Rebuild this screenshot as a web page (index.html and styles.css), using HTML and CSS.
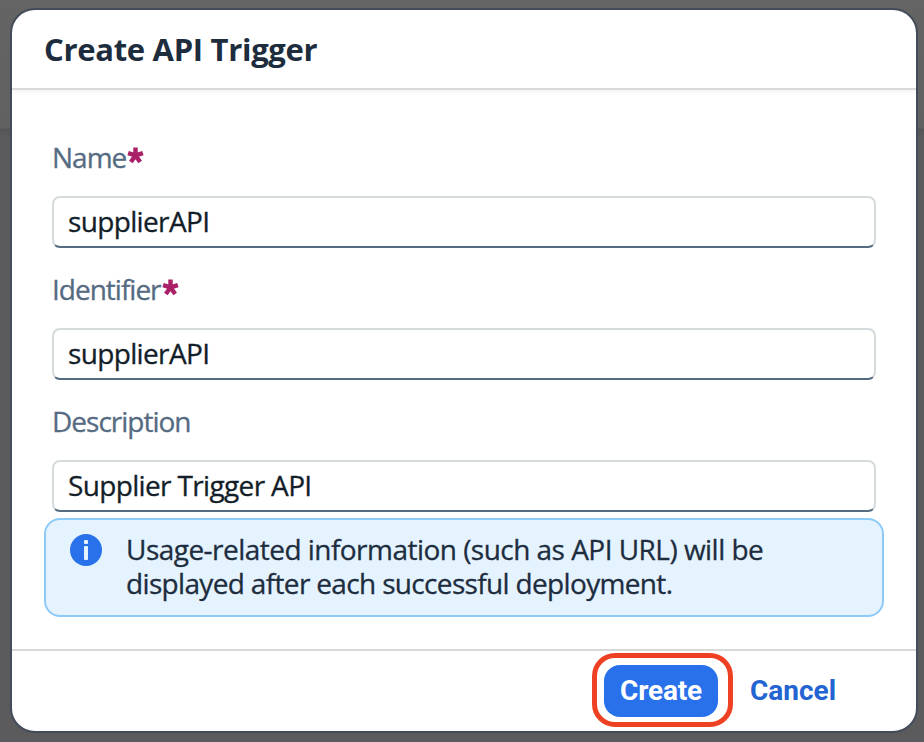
FILE: index.html
```html
<!DOCTYPE html>
<html lang="en">
<head>
<meta charset="utf-8">
<title>Create API Trigger</title>
<link rel="stylesheet" href="styles.css">
</head>
<body>
<div class="overlay">
  <section class="dialog" role="dialog" aria-labelledby="title">
    <header class="dialog-header"><h1 id="title" class="title">Create API Trigger</h1></header>
    <form class="dialog-body">
      <div class="field">
        <label class="label" for="name">Name<svg class="star" viewBox="0 0 16 17"><path d="M8 8V.5M8 8l7-2.2M8 8l4.4 6.1M8 8l-4.4 6.1M8 8L1 5.8"/></svg></label>
        <input class="input" id="name" type="text" value="supplierAPI">
      </div>
      <div class="field">
        <label class="label" for="identifier">Identifier<svg class="star" viewBox="0 0 16 17"><path d="M8 8V.5M8 8l7-2.2M8 8l4.4 6.1M8 8l-4.4 6.1M8 8L1 5.8"/></svg></label>
        <input class="input" id="identifier" type="text" value="supplierAPI">
      </div>
      <div class="field">
        <label class="label" for="description">Description</label>
        <input class="input" id="description" type="text" value="Supplier Trigger API">
      </div>
      <div class="info">
        <svg class="info-icon" viewBox="0 0 32 32"><circle cx="16" cy="16" r="16" fill="#2970eb"/><rect x="14" y="6" width="4" height="4" rx="1" fill="#e5f3ff"/><rect x="14" y="12" width="4" height="14" rx="1" fill="#e5f3ff"/></svg>
        <p class="info-text">Usage-related information (such as API URL) will be<br><span class="second-line">displayed after each successful deployment.</span></p>
      </div>
    </form>
    <footer class="dialog-footer">
      <div class="highlight"><button class="button primary" type="button">Create</button></div>
      <button class="button link" type="button">Cancel</button>
    </footer>
  </section>
</div>
</body>
</html>
```
FILE: styles.css
```css
* { box-sizing: border-box; }
body {
  margin: 0;
  font-family: "Open Sans", sans-serif;
  font-size: 28px;
  color: #1d2d3e;
}
.overlay {
  width: 924px;
  height: 742px;
  padding: 8px 6px 9px 10px;
  background: linear-gradient(#646464 0, #616161 128px, #545456 129px, #5b5b5e 137px, #5b5b5e 100%);
}
.dialog {
  display: flex;
  flex-direction: column;
  height: 725px;
  border: 2px solid #434c59;
  border-radius: 25px;
  background: #fff;
  overflow: hidden;
}
.dialog-header {
  height: 80px;
  flex: none;
  padding: 17px 32px 0;
  border-bottom: 2px solid #d9d9d9;
  box-shadow: 0 2px 5px rgba(0, 0, 0, .05);
}
.title {
  margin: 0;
  font-size: 31px;
  line-height: 44px;
  font-weight: 700;
  letter-spacing: -.3px;
}
.dialog-body {
  height: 559px;
  flex: none;
  padding: 39px 32px 0;
}
.field {
  height: 132px;
  padding: 0 8px;
}
.label {
  display: flex;
  align-items: center;
  height: 56px;
  color: #556b82;
  letter-spacing: -1px;
  -webkit-text-stroke: .3px currentColor;
}
.star {
  width: 17px;
  height: 18px;
  margin: 0 0 2px 1px;
  fill: none;
  stroke: #aa2168;
  stroke-width: 4.2;
}
.input {
  display: block;
  width: 824px;
  height: 52px;
  margin: 11px 0 0;
  padding: 0 14px 3px;
  border: 2px solid #d5dadd;
  border-bottom-color: #556b82;
  border-radius: 8px;
  outline: 0;
  background: #fff;
  color: #131e29;
  font: inherit;
  letter-spacing: -.65px;
  -webkit-text-stroke: .3px currentColor;
}
.info {
  display: flex;
  height: 99px;
  margin-top: -7px;
  padding: 14px 24px;
  border: 2px solid #8ccbf9;
  border-radius: 16px;
  background: #e5f3ff;
}
.info-icon {
  flex: none;
  width: 32px;
  height: 32px;
}
.info-text {
  margin: -2px 0 0 24px;
  line-height: 34px;
  letter-spacing: -.53px;
  white-space: nowrap;
  -webkit-text-stroke: .3px currentColor;
}
.second-line { letter-spacing: -.66px; }
.dialog-footer {
  display: flex;
  height: 82px;
  padding: 2px 0 0 580px;
  border-top: 2px solid #d9d9d9;
}
.highlight {
  width: 141px;
  height: 74px;
  padding: 7px;
  border: 5px solid #ee4023;
  border-radius: 23px;
}
.button {
  border: 0;
  font: 700 28px Roboto, sans-serif;
}
.primary {
  width: 114px;
  height: 52px;
  padding: 0 0 2px;
  border-radius: 16px;
  background: #2970eb;
  color: #fff;
  letter-spacing: -.2px;
}
.link {
  height: 52px;
  margin-top: 11px;
  padding: 0 17px;
  background: transparent;
  color: #2464d2;
}
```
